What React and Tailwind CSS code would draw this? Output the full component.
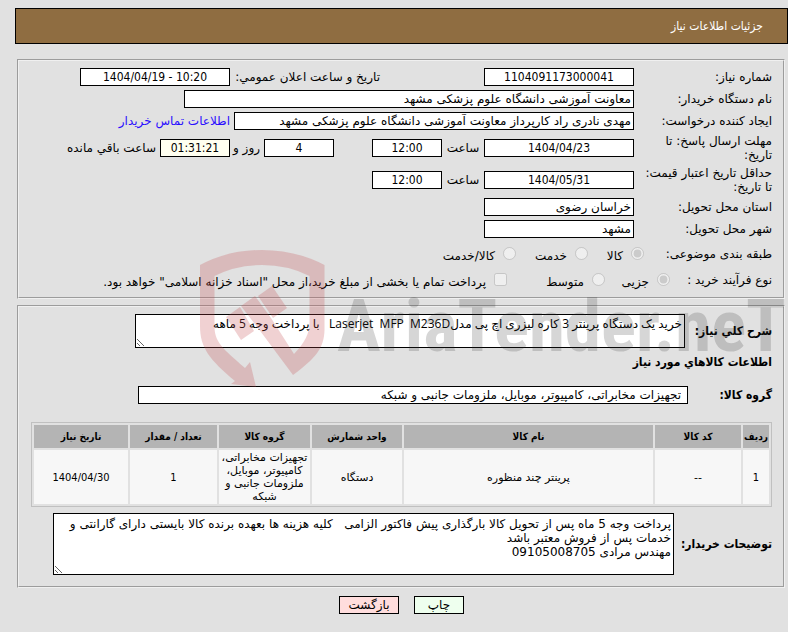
import React from 'react';
import clsx from 'clsx';

const columns = [
  { title: 'ردیف', width: 'w-[26px]', numeric: true },
  { title: 'کد کالا', width: 'w-[86px]' },
  { title: 'نام کالا', width: '' },
  { title: 'واحد شمارش', width: 'w-[90px]' },
  { title: 'گروه کالا', width: 'w-[91px]' },
  { title: 'تعداد / مقدار', width: 'w-[87px]', numeric: true },
  { title: 'تاریخ نیاز', width: 'w-[94px]', numeric: true },
];

const items = [
  ['1', '--', 'پرینتر چند منظوره', 'دستگاه', 'تجهیزات مخابراتی، کامپیوتر، موبایل، ملزومات جانبی و شبکه', '1', '1404/04/30'],
];

const description =
  'خرید یک دستگاه پرینتر 3 کاره لیزری اچ پی مدلLaserjet  MFP  M236D   با پرداخت وجه 5 ماهه';

const buyerNotes =
  'پرداخت وجه 5 ماه پس از تحویل کالا بارگذاری پیش فاکتور الزامی   کلیه هزینه ها بعهده برنده کالا بایستی دارای گارانتی و خدمات پس از فروش معتبر باشد\nمهندس مرادی 09105008705';

const Field = ({ className, ...props }) => (
  <input
    type="text"
    readOnly
    className={clsx('h-[18px] border border-black px-0.5', className)}
    {...props}
  />
);

// numbers and dates, always left to right and centred
const NumberField = ({ className, ...props }) => (
  <input
    type="text"
    dir="ltr"
    readOnly
    className={clsx(
      "h-[18px] border border-black text-center font-['DejaVu_Sans_Condensed','DejaVu_Sans',sans-serif]",
      className
    )}
    {...props}
  />
);

const Row = ({ label, htmlFor, height = 'h-[22px]', labelWidth = 'w-[138px]', children }) => (
  <div className={clsx('flex items-center', height)}>
    <label htmlFor={htmlFor} className={clsx('shrink-0', labelWidth)}>
      {label}
    </label>
    {children}
  </div>
);

const Choice = ({ type = 'radio', name, label, checked = false, className }) => (
  <label className={clsx('flex shrink-0 items-center gap-2', className)}>
    <input type={type} name={name} defaultChecked={checked} disabled className="size-[13px]" />
    <span className="pt-1">{label}</span>
  </label>
);

const Panel = ({ className, children }) => (
  <section
    className={clsx('ml-0.5 mr-[3px] border-2 border-[#f0f0f0] pl-3 pr-[11px] [border-style:groove]', className)}
  >
    {children}
  </section>
);

const Watermark = () => (
  <div dir="ltr" aria-hidden="true" className="pointer-events-none absolute inset-0 overflow-hidden">
    <div className="absolute left-[200px] top-[250px] flex items-start">
      <svg width="125" height="138" viewBox="0 0 125 138" className="shrink-0 fill-[#c3464a]/25">
        <path d="M0 15Q28 0 62 0Q96 0 124.500 15V80C124 98 116 108 93 125L58 78L41 56L55 46L71 68L94 104C105 92 109.500 84 109.500 72V26Q88 15 62 15Q36 15 14.500 26V76C14.500 92 22 98 45 118L50 112L56 137L31 134L35 131C10 110 0 98 0 76Z" />
        <path d="M26 67L40 57L54 81L41 90Z" />
        <path d="M58 46L72 36L87 58L73 68Z" />
      </svg>
      <span className="ml-3 mt-10 whitespace-nowrap font-['Roboto_Condensed','Arial_Narrow','Roboto',sans-serif] text-[73px] font-bold leading-[72px] text-[#323232]/20">
        AriaTender.neT
      </span>
    </div>
  </div>
);

const App = () => {
  return (
    <div
      dir="rtl"
      lang="fa"
      className="relative min-h-screen bg-[#e1e1e1] pl-[15px] pt-2 font-['DejaVu_Sans',sans-serif] text-[12px] leading-[14px] text-black [&_input]:bg-white [&_textarea]:bg-white"
    >
      <header className="flex h-9 items-center border border-black bg-[#8f6d41] px-6 text-white">
        <h1 className="font-['DejaVu_Sans_Condensed','DejaVu_Sans',sans-serif]">جزئیات اطلاعات نیاز</h1>
      </header>

      <Panel className="mt-[15px] py-[5px]">
        <Row label="شماره نیاز:" htmlFor="number">
          <NumberField id="number" defaultValue="1104091173000041" className="w-[150px]" />
          <label htmlFor="announced" className="mr-[104px] w-[150px] whitespace-nowrap">
            تاریخ و ساعت اعلان عمومي:
          </label>
          <NumberField id="announced" defaultValue="1404/04/19 - 10:20" className="w-[150px]" />
        </Row>
        <Row label="نام دستگاه خریدار:" htmlFor="buyer">
          <Field id="buyer" defaultValue="معاونت آموزشی دانشگاه علوم پزشکی مشهد" className="w-[450px]" />
        </Row>
        <Row label="ایجاد کننده درخواست:" htmlFor="creator">
          <Field
            id="creator"
            defaultValue="مهدی نادری راد کارپرداز معاونت آموزشی دانشگاه علوم پزشکی مشهد"
            className="w-[400px]"
          />
          <a href="#contact" className="mr-1 whitespace-nowrap text-[#2a0dff]">
            اطلاعات تماس خریدار
          </a>
        </Row>
        <Row label={<>مهلت ارسال پاسخ: تا<br />تاریخ:</>} htmlFor="deadline" height="h-8">
          <NumberField id="deadline" defaultValue="1404/04/23" className="w-[150px]" />
          <label htmlFor="deadline-time" className="w-[42px] text-center">ساعت</label>
          <NumberField id="deadline-time" defaultValue="12:00" className="w-[70px]" />
          <NumberField id="days" defaultValue="4" className="mr-[38px] w-[70px]" />
          <label htmlFor="days" className="w-[34px] whitespace-nowrap pr-1">روز و</label>
          <NumberField id="remaining" defaultValue="01:31:21" className="w-[70px] bg-[#fffff0]!" />
          <label htmlFor="remaining" className="mr-1">ساعت باقي مانده</label>
        </Row>
        <Row label={<>حداقل تاریخ اعتبار قیمت:<br />تا تاریخ:</>} htmlFor="validity" height="h-8">
          <NumberField id="validity" defaultValue="1404/05/31" className="w-[150px]" />
          <label htmlFor="validity-time" className="w-[42px] text-center">ساعت</label>
          <NumberField id="validity-time" defaultValue="12:00" className="w-[70px]" />
        </Row>
        <Row label="استان محل تحویل:" htmlFor="province">
          <Field id="province" defaultValue="خراسان رضوی" className="w-[150px]" />
        </Row>
        <Row label="شهر محل تحویل:" htmlFor="city">
          <Field id="city" defaultValue="مشهد" className="w-[150px]" />
        </Row>
        <Row label="طبقه بندی موضوعی:" height="h-[27px]" labelWidth="w-[128px]">
          <Choice name="category" label="کالا" checked className="w-14" />
          <Choice name="category" label="خدمت" className="w-[72px]" />
          <Choice name="category" label="کالا/خدمت" />
        </Row>
        <Row label="نوع فرآیند خرید :" height="h-[25px]" labelWidth="w-[102px]">
          <Choice name="process" label="جزیی" checked className="w-[65px]" />
          <Choice name="process" label="متوسط" className="w-[98px]" />
          <Choice
            type="checkbox"
            name="treasury"
            label={'پرداخت تمام یا بخشی از مبلغ خرید،از محل "اسناد خزانه اسلامی" خواهد بود.'}
          />
        </Row>
      </Panel>

      <Panel className="mt-1.5 pb-[11px] pt-[7px]">
        <div className="flex items-center">
          <label htmlFor="description" className="w-[87px] shrink-0 whitespace-nowrap font-['DejaVu_Sans_Condensed','DejaVu_Sans',sans-serif] font-bold">
            شرح کلي نیاز:
          </label>
          <textarea
            id="description"
            readOnly
            defaultValue={description}
            className="h-[34px] w-[550px] resize border border-black px-0.5 py-0.5 font-['Open_Sans','DejaVu_Sans',sans-serif]"
          />
        </div>
        <h2 className="mt-[7px] font-['DejaVu_Sans_Condensed','DejaVu_Sans',sans-serif] font-bold">
          اطلاعات کالاهاي مورد نیاز
        </h2>
        <div className="mt-[17px] flex items-center">
          <label htmlFor="group" className="w-[84px] shrink-0 font-['DejaVu_Sans_Condensed','DejaVu_Sans',sans-serif] font-bold">
            گروه کالا:
          </label>
          <Field
            id="group"
            defaultValue="تجهیزات مخابراتی، کامپیوتر، موبایل، ملزومات جانبی و شبکه"
            className="w-[550px] px-1.5"
          />
        </div>

        <table className="mt-[18px] w-full table-fixed border-separate border-spacing-0.5 border border-[#c0c0c0] text-center text-[11px] leading-[13px]">
          <thead>
            <tr className="h-[23px] bg-[#b4b4b4] font-['DejaVu_Sans_Condensed','DejaVu_Sans',sans-serif] text-[10px]">
              {columns.map(col => (
                <th key={col.title} className={clsx('whitespace-nowrap p-0', col.width)}>
                  {col.title}
                </th>
              ))}
            </tr>
          </thead>
          <tbody>
            {items.map(item => (
              <tr key={item[0]} className="h-[54px] bg-[#f7f7f7]">
                {item.map((cell, i) => (
                  <td
                    key={columns[i].title}
                    className={clsx(
                      'px-0.5 py-px',
                      columns[i].numeric && "font-['DejaVu_Sans_Condensed','DejaVu_Sans',sans-serif]"
                    )}
                  >
                    {cell}
                  </td>
                ))}
              </tr>
            ))}
          </tbody>
        </table>

        <div className="mt-1.5 flex items-center">
          <label htmlFor="notes" className="w-[98px] shrink-0 font-['DejaVu_Sans_Condensed','DejaVu_Sans',sans-serif] font-bold">
            توضیحات خریدار:
          </label>
          <textarea
            id="notes"
            readOnly
            defaultValue={buyerNotes}
            className="h-[62px] w-[621px] resize border border-black px-0.5 py-[3px]"
          />
        </div>
      </Panel>

      <div className="mt-2 flex justify-center gap-[15px]">
        <button type="button" className="h-[18px] w-[50px] border border-black bg-[#eeffee]">چاپ</button>
        <button type="button" className="h-[18px] w-[60px] border border-black bg-[#ffdddd]">بازگشت</button>
      </div>

      <Watermark />
    </div>
  );
};

export default App;
